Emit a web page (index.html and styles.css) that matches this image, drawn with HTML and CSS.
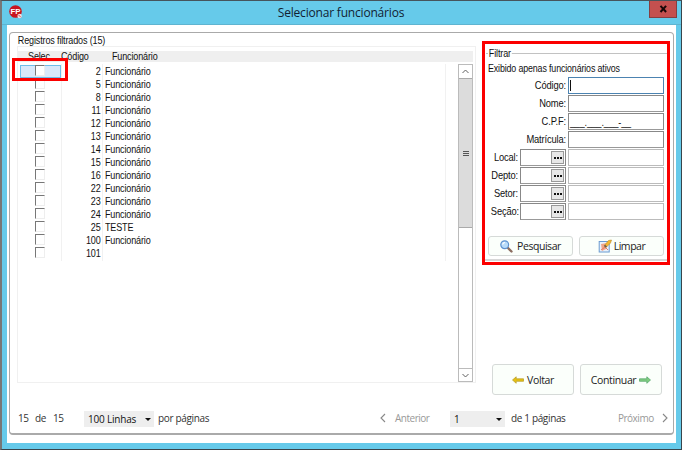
FILE: index.html
```html
<!DOCTYPE html>
<html lang="pt-BR">
<head>
<meta charset="utf-8">
<title>Selecionar funcionários</title>
<link rel="stylesheet" href="styles.css">
</head>
<body>
<div class="window">
  <header class="titlebar">
    <svg class="logo" width="14" height="14" viewBox="0 0 14 14"><circle cx="6.500" cy="6.500" r="6.300" fill="#c8141f"/><text x="1.400" y="9" font-size="8" font-weight="bold" fill="#fff" textLength="10" lengthAdjust="spacingAndGlyphs">FP</text><circle cx="10.600" cy="11" r="2.200" fill="#f7dfe0"/><path d="M9.300 9.700l2.600 2.600" stroke="#b9313a" stroke-width=".8"/></svg>
    <h1>Selecionar funcionários</h1>
    <button class="close" aria-label="Fechar"><svg width="9" height="8" viewBox="0 0 9 8"><path d="M1.500 .8l5.600 6.200M7.100 .8L1.500 7" stroke="#180808" stroke-width="2"/></svg></button>
  </header>
  <main class="client">
    <section class="group">
      <div class="body">
        <div class="left">
          <div class="caption">Registros filtrados (15)</div>
          <div class="list">
            <div class="row head"><span>Selec.</span><span>Código</span><span>Funcionário</span></div>
            <div class="view">
              <div class="rows">
                <div class="row active"><i></i><span>2</span><span>Funcionário</span></div>
                <div class="row"><i></i><span>5</span><span>Funcionário</span></div>
                <div class="row"><i></i><span>8</span><span>Funcionário</span></div>
                <div class="row"><i></i><span>11</span><span>Funcionário</span></div>
                <div class="row"><i></i><span>12</span><span>Funcionário</span></div>
                <div class="row"><i></i><span>13</span><span>Funcionário</span></div>
                <div class="row"><i></i><span>14</span><span>Funcionário</span></div>
                <div class="row"><i></i><span>15</span><span>Funcionário</span></div>
                <div class="row"><i></i><span>16</span><span>Funcionário</span></div>
                <div class="row"><i></i><span>22</span><span>Funcionário</span></div>
                <div class="row"><i></i><span>23</span><span>Funcionário</span></div>
                <div class="row"><i></i><span>24</span><span>Funcionário</span></div>
                <div class="row"><i></i><span>25</span><span>TESTE</span></div>
                <div class="row"><i></i><span>100</span><span>Funcionário</span></div>
                <div class="row"><i></i><span>101</span><span></span></div>
              </div>
              <div class="scroll">
                <div class="step"><svg width="7" height="5"><path d="M.5 4l3-3 3 3" fill="none" stroke="#606060"/></svg></div>
                <div class="thumb"><b></b></div>
                <div class="step down"><svg width="7" height="5"><path d="M.5 1l3 3 3-3" fill="none" stroke="#606060"/></svg></div>
              </div>
            </div>
          </div>
        </div>
        <aside class="side">
          <div class="filter">
            <div class="legend"><span>Filtrar</span></div>
            <p>Exibido apenas funcionários ativos</p>
            <div class="field"><label>Código:</label><div class="input focus"><b class="caret"></b></div></div>
            <div class="field"><label>Nome:</label><div class="input"></div></div>
            <div class="field"><label>C.P.F:</label><div class="input"><span class="mask">___.___.___-__</span></div></div>
            <div class="field"><label>Matrícula:</label><div class="input"></div></div>
            <div class="field lookup"><label>Local:</label><div class="input"><button><b></b></button></div><div class="input ro"></div></div>
            <div class="field lookup"><label>Depto:</label><div class="input"><button><b></b></button></div><div class="input ro"></div></div>
            <div class="field lookup"><label>Setor:</label><div class="input"><button><b></b></button></div><div class="input ro"></div></div>
            <div class="field lookup"><label>Seção:</label><div class="input"><button><b></b></button></div><div class="input ro"></div></div>
            <div class="actions">
              <button class="btn search"><svg width="13" height="13" viewBox="0 0 13 13"><path d="M7.500 7.500l4 4" stroke="#8b6d60" stroke-width="2.400" stroke-linecap="round"/><circle cx="4.700" cy="4.700" r="3.900" fill="#b8dcfa" stroke="#5d91cf" stroke-width="1.200"/><path d="M2.600 4.500q.4-2 2.400-2" fill="none" stroke="#fff" stroke-width="1.200"/></svg><span>Pesquisar</span></button>
              <button class="btn clear"><svg width="14" height="14" viewBox="0 0 14 14"><rect x="1.200" y="2.500" width="10" height="10.500" fill="#e9f2fc" stroke="#6b9bd1"/><path d="M3 5l6-1-1 6-4 2z" fill="#f0a58a"/><path d="M3 11l4-3 3 3" stroke="#e07a68" fill="none"/><path d="M6 7l4.500-5.500L13.500 1 12.500 4 8 8.500z" fill="#f3b72f" stroke="#b98a2c" stroke-width=".6"/><path d="M6 7l2 1.500 1-1-2-1.800z" fill="#665755"/></svg><span>Limpar</span></button>
            </div>
          </div>
          <div class="nav">
            <button class="btn"><svg width="12" height="8" viewBox="0 0 12 8"><path d="M.5 4L4.200.8v2h7.300v2.500H4.200v2z" fill="#e5c012" stroke="#b59a23" stroke-width=".7"/></svg><span>Voltar</span></button>
            <button class="btn"><span>Continuar</span><svg width="12" height="8" viewBox="0 0 12 8"><path d="M11.500 4L7.800.8v2H.5v2.500h7.300v2z" fill="#7fcb80" stroke="#4fa565" stroke-width=".7"/></svg></button>
          </div>
        </aside>
      </div>
      <footer class="pager">
        <span>15</span><span>de</span><span>15</span>
        <div class="select"><span>100 Linhas</span><b></b></div>
        <span class="per">por páginas</span>
        <span class="prev"><svg width="6" height="10"><path d="M5 1L1 5l4 4" fill="none" stroke="#888" stroke-width="1.100"/></svg><em>Anterior</em></span>
        <div class="select page"><span>1</span><b></b></div>
        <span class="pages">de 1 páginas</span>
        <span class="next"><em>Próximo</em><svg width="6" height="10"><path d="M1 1l4 4-4 4" fill="none" stroke="#888" stroke-width="1.100"/></svg></span>
      </footer>
    </section>
  </main>
  <div class="mark mark-check"></div>
  <div class="mark mark-filter"></div>
</div>
</body>
</html>
```
FILE: styles.css
```css
* { box-sizing: border-box; }
body { margin: 0; background: #45565f; font: 11px/13px "Liberation Sans", sans-serif; letter-spacing: -.17px; color: #111; }
button { font: inherit; letter-spacing: inherit; padding: 0; margin: 0; color: inherit; }
svg { display: block; flex: none; }
.window { position: relative; width: 682px; height: 450px; display: flex; flex-direction: column; background: #66caea; border: solid; border-width: 1px 1px 1px 2px; border-color: #46545c #38454c #38454c #777; overflow: hidden; }
.titlebar { height: 24px; flex: none; display: flex; align-items: flex-start; padding-right: 4px; border-bottom: 1px solid #5fb4d0; }
.logo { margin: 4px 0 0 7px; letter-spacing: 0; }
.titlebar h1 { flex: 1; margin: 1px 0 0 10px; text-align: center; font: 12px/22px "Open Sans", "Noto Sans", sans-serif; letter-spacing: -.19px; color: #123; }
.close { width: 28px; height: 17px; background: #c4504f; border: 1px solid #853f42; border-top: 0; display: flex; align-items: center; justify-content: center; }
.client { flex: 1; margin: 0 5px 6px; padding: 7px 2px 8px; background: #fff; }
.group { height: 100%; border: 1px solid #aaa; border-width: 1px 1px 2px; border-radius: 4px; display: flex; flex-direction: column; }
.body { flex: 1; display: flex; }
.left { width: 459px; margin: 1px 0 0 7px; }

/* condensed dialog face */
.caption, .row span, .legend span, .filter p, .field label, .mask { transform: scaleX(.82); transform-origin: 0 50%; white-space: nowrap; }

.caption { height: 12px; padding-left: 1px; }
.list { height: 337px; width: 459px; border: 1px solid #f0f0f0; padding: 4px 2px 0 0; }
.row { display: grid; grid-template-columns: 44px 41px 1fr; height: 13px; }
.head { height: 11px; line-height: 11px; background: #efefef; margin-bottom: 2px; }
.head span:nth-child(1) { margin-left: 10px; }
.head span:nth-child(2) { margin-left: -1px; }
.head span:nth-child(3) { margin-left: 9px; }
.view { height: 318px; display: flex; justify-content: space-between; }
.rows { width: 428px; height: 197px; padding-top: 1px; background:
  linear-gradient(#f1f1f1, #f1f1f1) 43px 0 / 1px 100% no-repeat,
  linear-gradient(#f1f1f1, #f1f1f1) 84px 0 / 1px 100% no-repeat,
  linear-gradient(#f1f1f1, #f1f1f1) 427px 0 / 1px 100% no-repeat; }
.rows .row span:nth-child(2) { text-align: right; padding-right: 3px; transform-origin: 100% 50%; }
.rows .row span:nth-child(3) { margin-left: 2px; }
.row i { width: 10px; height: 11px; margin-left: 17px; border: 1px solid #eee; border-top: 1px solid #777; border-left: 1px solid #777; background: #fff; }
.active { background: linear-gradient(#d9e8fa, #d9e8fa) 3px 1px / 39px 11px no-repeat, linear-gradient(#6fbde9, #6fbde9) 2px 0 / 41px 13px no-repeat; }
.scroll { width: 15px; border: 1px solid #bbb; display: flex; flex-direction: column; }
.step { height: 13px; flex: none; display: flex; align-items: center; justify-content: center; }
.thumb { height: 150px; background: #dcdcdc; border: solid #aaa; border-width: 1px 0; display: flex; align-items: center; justify-content: center; }
.thumb b { width: 6px; height: 5px; border: solid #555; border-width: 1px 0; background: linear-gradient(transparent 1px, #555 1px 2px, transparent 2px); }
.down { margin-top: auto; border-top: 1px solid #bbb; }
.side { width: 188px; margin-left: 6px; }
.filter { margin-top: 14px; padding: 0 6px 0 4px; height: 214px; border-bottom: 2px solid #d7d7d7; }
.legend { height: 13px; margin: 0 -3px 0 0; background: linear-gradient(#c2c2c2, #c2c2c2) 0 6px / 100% 1px no-repeat; }
.legend span { display: inline-block; background: #fff; padding: 0 1px; margin-left: 2px; }
.filter p { margin: 2px 0 2px 2px; line-height: 13px; transform: scaleX(.806); }
.field { display: grid; grid-template-columns: 80px 96px; column-gap: 2px; height: 18px; line-height: 17px; text-align: right; }
.field label { transform: scaleX(.85); transform-origin: 100% 50%; }
.input { height: 18px; margin-bottom: -1px; border: 1px solid #888; border-bottom-color: #999; height: 17px; background: #fff; text-align: left; padding-left: 1px; font-size: 10px; }
.mask { display: inline-block; transform: scaleX(.9); line-height: 15px; }
.focus { border-color: #4c83b1; }
.caret { display: block; width: 1px; height: 11px; margin: 2px 0 0; background: #111; }
.lookup { grid-template-columns: 32px 46px 96px; }
.lookup .input { display: flex; justify-content: flex-end; align-items: center; padding: 0 1px; }
.lookup .ro { border-color: #bbb; }
.lookup button { width: 13px; height: 13px; border: 1px solid #999; background: #e7e7e7; display: flex; align-items: center; justify-content: center; }
.lookup button b { width: 8px; height: 2px; background: repeating-linear-gradient(90deg, #111 0 2px, transparent 2px 3px); }
.btn { background: #fbfffb; border: 1px solid #d6dad8; border-radius: 3px; display: flex; align-items: center; justify-content: center; gap: 4px; font: 10.5px/14px "Open Sans", "Noto Sans", sans-serif; letter-spacing: -.35px; color: #222; }
.actions { display: flex; gap: 6px; margin: 15px 0 0 2px; }
.actions .btn { width: 85px; height: 20px; }
.actions .search { letter-spacing: -.45px; }
.actions .clear { gap: 2px; letter-spacing: -.45px; }
.nav { display: flex; gap: 6px; margin: 103px 0 0 10px; }
.nav .btn { width: 82px; height: 31px; gap: 3px; }
.pager { height: 34px; display: grid; grid-template-columns: 17px 18px 31px 70px 226px 70px 61px 107px 1fr; padding: 9px 0 0 8px; font: 10px/20px "Open Sans", "Noto Sans", sans-serif; letter-spacing: -.35px; color: #333; white-space: nowrap; }
.pager em { font-style: normal; color: #999; letter-spacing: -.5px; }
.per { padding-left: 4px; }
.prev, .next { display: flex; align-items: center; gap: 9px; height: 20px; }
.next { gap: 8px; }
.select { margin-top: 3px; height: 16px; background: #eee; display: flex; justify-content: space-between; align-items: center; padding: 0 3px 0 4px; color: #111; letter-spacing: -.2px; }
.select b { border: 3px solid transparent; border-top-color: #111; border-bottom: 0; }
.page { width: 55px; }
.mark { position: absolute; border: 3px solid #fb0000; pointer-events: none; }
.mark-check { left: 10px; top: 57px; width: 56px; height: 23px; }
.mark-filter { left: 480px; top: 40px; width: 188px; height: 224px; }
```
